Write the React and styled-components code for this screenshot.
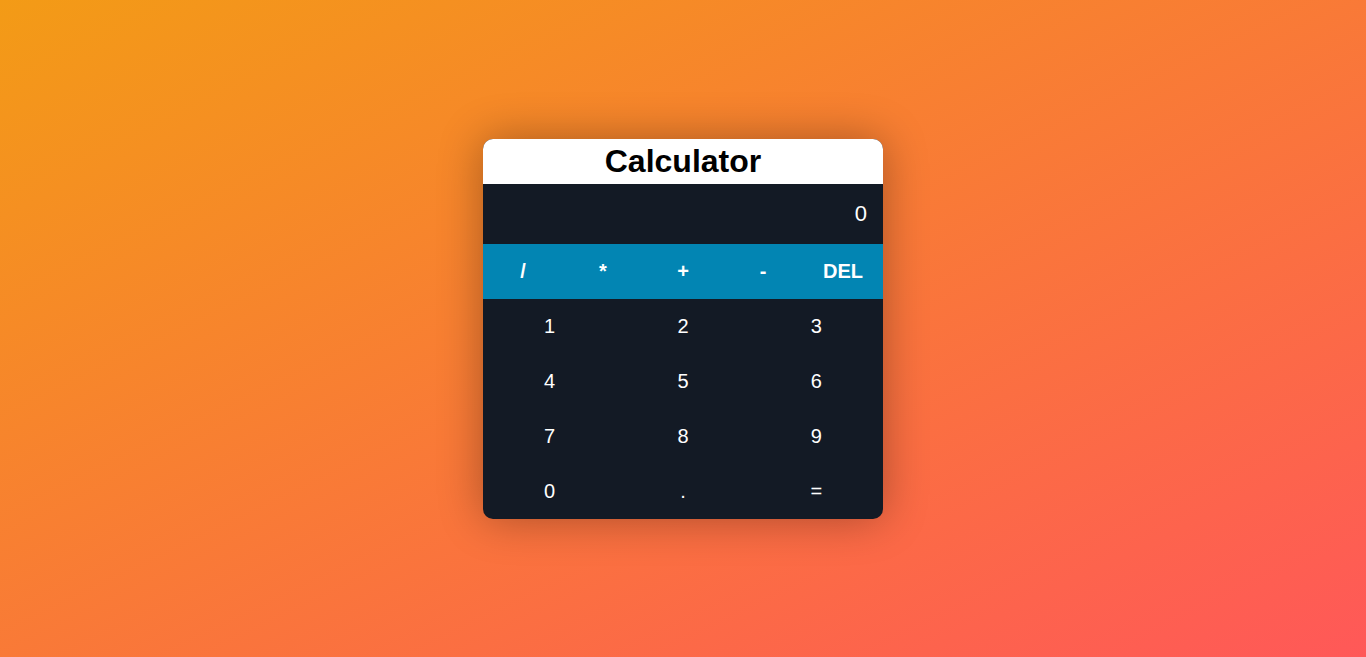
import styled, { createGlobalStyle } from 'styled-components';

const GlobalStyle = createGlobalStyle`
  * {
    box-sizing: border-box;
  }
  html, body {
    margin: 0;
    padding: 0;
  }
  body {
    font-family: "Liberation Sans", Arial, sans-serif;
  }
`;

const operators = ['/', '*', '+', '-', 'DEL'];
const digits = ['1', '2', '3', '4', '5', '6', '7', '8', '9', '0', '.', '='];

const App = () => {
  return (
    <>
      <GlobalStyle />
      <Page>
        <Calculator>
          <Title>Calculator</Title>
          <Display>0</Display>
          <Operators>
            {operators.map((op) => (
              <OpButton key={op}>{op}</OpButton>
            ))}
          </Operators>
          <Digits>
            {digits.map((d) => (
              <DigitButton key={d}>{d}</DigitButton>
            ))}
          </Digits>
        </Calculator>
      </Page>
    </>
  );
};

export default App;

const Page = styled.main`
  width: 100%;
  height: 657px;
  display: flex;
  align-items: center;
  justify-content: center;
  background: linear-gradient(to bottom right, #f39b16, #ff5858);
`;

const Calculator = styled.div`
  width: 400px;
  border-radius: 10px;
  overflow: hidden;
  background-color: #131a25;
  box-shadow: 0 0 45px rgba(0, 0, 0, 0.32);
`;

const Title = styled.h1`
  margin: 0;
  height: 45px;
  display: flex;
  align-items: center;
  justify-content: center;
  background-color: #fff;
  color: #000;
  font-size: 32px;
  font-weight: 700;
`;

const Display = styled.div`
  height: 60px;
  display: flex;
  align-items: center;
  justify-content: flex-end;
  padding: 0 16px;
  color: #fff;
  font-size: 22px;
`;

const Operators = styled.div`
  display: grid;
  grid-template-columns: repeat(5, 1fr);
  background-color: #0285b3;
`;

const ButtonBase = styled.button`
  height: 55px;
  border: none;
  background: transparent;
  color: #fff;
  font-family: "Liberation Sans", Arial, sans-serif;
  font-size: 20px;
  cursor: pointer;
  padding: 0;
`;

const OpButton = styled(ButtonBase)`
  font-weight: 700;
`;

const Digits = styled.div`
  display: grid;
  grid-template-columns: repeat(3, 1fr);
`;

const DigitButton = styled(ButtonBase)`
  font-weight: 400;
`;
